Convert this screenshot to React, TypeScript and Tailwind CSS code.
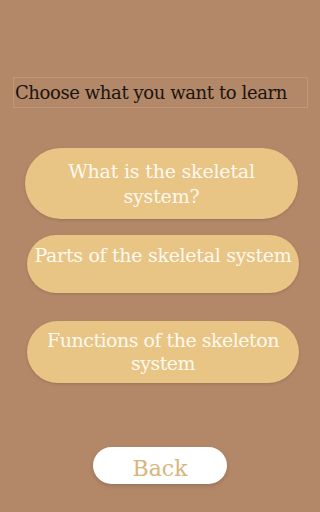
import React from "react";

export default function App() {
  const font = { fontFamily: '"DejaVu Serif", "Liberation Serif", serif' };
  return (
    <div className="w-[320px] h-[512px] bg-[#b38868] flex flex-col" style={font}>
      <div className="mt-[77px] ml-[13px] w-[295px] h-[31px] border border-[#c09779] flex items-center pl-[1px]">
        <span className="text-[18px] text-[#1a1410] tracking-[-0.4px] leading-none">Choose what you want to learn</span>
      </div>
      <button className="mt-[40px] ml-[25px] w-[273px] h-[71px] rounded-full bg-[#e8c485] shadow-[0_1px_3px_rgba(0,0,0,0.15)] text-[#fef9ee] text-[19px] leading-[25px] tracking-[-0.2px] flex items-center justify-center text-center px-[40px]">
        What is the skeletal system?
      </button>
      <button className="mt-[16px] ml-[27px] w-[272px] h-[58px] rounded-full bg-[#e8c485] shadow-[0_1px_3px_rgba(0,0,0,0.15)] text-[#fef9ee] text-[19px] leading-[25px] tracking-[-0.3px] flex items-start justify-center text-center pt-[8px] whitespace-nowrap">
        Parts of the skeletal system
      </button>
      <button className="mt-[28px] ml-[27px] w-[272px] h-[62px] rounded-full bg-[#e8c485] shadow-[0_1px_3px_rgba(0,0,0,0.15)] text-[#fef9ee] text-[19px] leading-[23px] tracking-[-0.5px] flex items-center justify-center text-center px-[8px]">
        Functions of the skeleton system
      </button>
      <button className="mt-[64px] ml-[93px] w-[134px] h-[37px] rounded-full bg-white shadow-[0_2px_4px_rgba(0,0,0,0.15)] text-[#d8b57e] text-[22px] flex items-center justify-center pt-[6px]">
        Back
      </button>
    </div>
  );
}
